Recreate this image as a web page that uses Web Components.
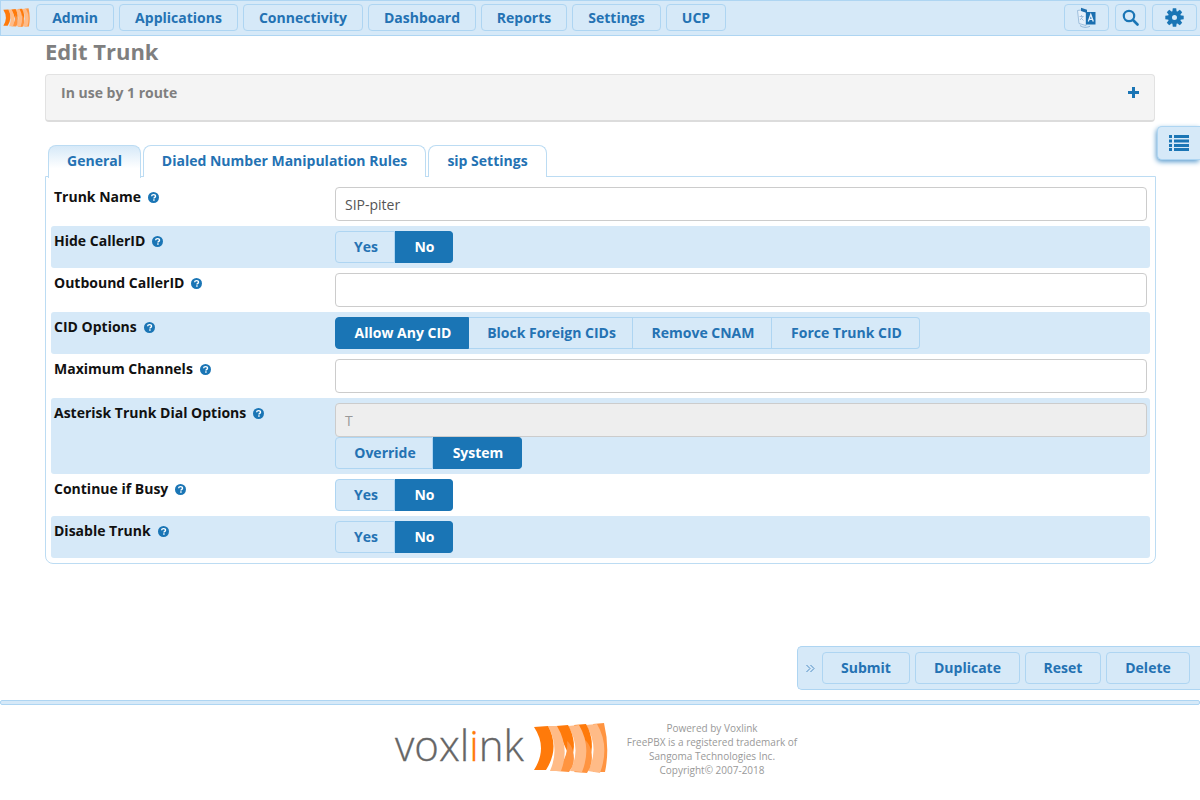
<!DOCTYPE html>
<html><head><meta charset="utf-8"><title>Edit Trunk</title>
<style>
html,body{margin:0;padding:0;background:#fff;font-family:"Open Sans",sans-serif;font-size:14px;color:#111}
body{width:1200px;height:800px;overflow:hidden;position:relative}
</style></head><body>
<fpbx-nav>
 <fpbx-btn style="margin-right:5px;width:78px">Admin</fpbx-btn><fpbx-btn style="margin-right:5px;width:119px">Applications</fpbx-btn><fpbx-btn style="margin-right:5px;width:120px">Connectivity</fpbx-btn><fpbx-btn style="margin-right:5px;width:108px">Dashboard</fpbx-btn><fpbx-btn style="margin-right:5px;width:86px">Reports</fpbx-btn><fpbx-btn style="margin-right:5px;width:89px">Settings</fpbx-btn><fpbx-btn style="width:60px">UCP</fpbx-btn>
</fpbx-nav>
<fpbx-side></fpbx-side>
<fpbx-main>
 <fpbx-panel>In use by 1 route</fpbx-panel>
 <fpbx-tabs></fpbx-tabs>
 <fpbx-form>
  <fpbx-row label="Trunk Name" kind="plain"><fpbx-field value="SIP-piter"></fpbx-field></fpbx-row>
  <fpbx-row label="Hide CallerID" kind="band"><fpbx-toggle items="Yes,No" widths="60,58" on="1"></fpbx-toggle></fpbx-row>
  <fpbx-row label="Outbound CallerID" kind="plain"><fpbx-field></fpbx-field></fpbx-row>
  <fpbx-row label="CID Options" kind="band"><fpbx-toggle items="Allow Any CID,Block Foreign CIDs,Remove CNAM,Force Trunk CID" widths="134,164,139,148" on="0"></fpbx-toggle></fpbx-row>
  <fpbx-row label="Maximum Channels" kind="plain"><fpbx-field></fpbx-field></fpbx-row>
  <fpbx-row label="Asterisk Trunk Dial Options" kind="band"><fpbx-field value="T" disabled></fpbx-field><fpbx-toggle items="Override,System" widths="98,89" on="1"></fpbx-toggle></fpbx-row>
  <fpbx-row label="Continue if Busy" kind="plain2"><fpbx-toggle items="Yes,No" widths="60,58" on="1"></fpbx-toggle></fpbx-row>
  <fpbx-row label="Disable Trunk" kind="band"><fpbx-toggle items="Yes,No" widths="60,58" on="1"></fpbx-toggle></fpbx-row>
 </fpbx-form>
</fpbx-main>
<fpbx-actions></fpbx-actions>
<fpbx-footer></fpbx-footer>
<script>
function def(name,css,html,init){
  customElements.define(name,class extends HTMLElement{
    constructor(){super();this.attachShadow({mode:'open'})}
    connectedCallback(){
      this.shadowRoot.innerHTML='<style>'+css+'</style>'+(typeof html==='function'?html(this):html);
      if(init)init(this);
    }
  });
}
const BLUE='#1a75b5',TXT='#2472b3';
const LOGO=`<path d="M593 724 L604 723 Q610 748 605 772 L593 772 Q601 748 593 724Z" fill="#ff9440"/>`
 +`<g transform="translate(40 -2)"><path d="M546 727 L557 726 Q570 748 560 775 L548 773 Q560 750 546 727Z" fill="#ffbb87"/><path d="M534 727 L546 726 Q556 744 549 762 Q546 755 534 727Z" fill="#ff7a0a"/><path d="M534 774 L547 775 Q554 765 551 752 Q549 745 545 742 Q547 758 534 774Z" fill="#ff9440"/></g>`
 +`<g transform="translate(22 -1)"><path d="M546 727 L557 726 Q570 748 560 773 L548 772 Q560 750 546 727Z" fill="#ffbb87"/><path d="M534 727 L546 726 Q556 744 549 760 Q546 755 534 727Z" fill="#ff7a0a"/><path d="M534 772 L547 773 Q554 765 551 752 Q549 745 545 742 Q547 758 534 772Z" fill="#ff9440"/></g>`
 +`<path d="M548 726 L557 726 Q570 748 561 771 L550 771 Q560 748 548 726Z" fill="#ffbb87"/><path d="M534 727 L548 726 Q560 748 546 770 L534 770 Q548 748 534 727Z" fill="#ff7a0a"/>`;
def('fpbx-btn',`:host{display:inline-flex;box-sizing:border-box;height:27px;align-items:center;justify-content:center;background:#d6e9f8;border:1px solid #aed5f2;border-radius:4px;color:${TXT};font:700 14px/1 "Open Sans",sans-serif;white-space:nowrap}`,`<slot></slot>`);
def('fpbx-nav',`:host{display:flex;box-sizing:border-box;height:36px;background:#d6e9f8;border:1px solid #aed5f2;border-width:1px 0 1px 1px;padding:3px 0 0 2px;align-items:flex-start}
 .logo{width:27px;height:20px;margin:4px 6px 0 0;flex:none}
 .r{margin-left:auto;display:flex;gap:6px}
 .items{display:flex}`,
 `<svg class="logo" viewBox="533 722 75 54" preserveAspectRatio="none">${LOGO}</svg>
 <div class="items"><slot></slot></div>
 <div class="r">
  <fpbx-btn style="width:45px"><svg width="19" height="21" viewBox="0 0 19 21">
   <path d="M.5 3.500 4 3 9 5V18.500L2 16.500Z" fill="#e6f1fb" stroke="#8fb4d6" stroke-width=".8"/>
   <path d="M4 .8 10 2.800V6L4 4Z" fill="#1f6fae"/>
   <path d="M9 5H18.500V17.500H9Z" fill="#1a6fb0"/>
   <path d="M11.300 14.500 13.800 7.500 16.300 14.500M12.200 12.300H15.400" stroke="#e6f1fb" stroke-width="1.300" fill="none"/>
   <path d="M2.500 9.500H6.500M4.500 8V9.500M3 13 6 9.500M4 11 6.500 13.500" stroke="#8fb4d6" stroke-width=".8" fill="none"/>
   <path d="M3 18.500C6 20.800 10 20.800 13 19.200" stroke="#8fb4d6" fill="none"/>
  </svg></fpbx-btn>
  <fpbx-btn style="width:31px"><svg width="17" height="17" viewBox="0 0 17 17"><circle cx="7" cy="7" r="5.200" fill="none" stroke="${BLUE}" stroke-width="2.200"/><path d="M11 11 15.500 15.500" stroke="${BLUE}" stroke-width="2.600" stroke-linecap="round"/></svg></fpbx-btn>
  <fpbx-btn style="width:45px;margin-right:3px"><svg width="19" height="19" viewBox="0 0 19 19"><g fill="${BLUE}"><path d="M9.500 3a6.500 6.500 0 1 0 0 13 6.500 6.500 0 0 0 0-13Zm0 4a2.500 2.500 0 1 1 0 5 2.500 2.500 0 0 1 0-5Z" fill-rule="evenodd"/>
  <path d="M7.800 .3h3.400l.5 3.700h-4.400Z"/><path d="M7.800 .3h3.400l.5 3.700h-4.400Z" transform="rotate(45 9.500 9.500)"/><path d="M7.800 .3h3.400l.5 3.700h-4.400Z" transform="rotate(90 9.500 9.500)"/><path d="M7.800 .3h3.400l.5 3.700h-4.400Z" transform="rotate(135 9.500 9.500)"/><path d="M7.800 .3h3.400l.5 3.700h-4.400Z" transform="rotate(180 9.500 9.500)"/><path d="M7.800 .3h3.400l.5 3.700h-4.400Z" transform="rotate(225 9.500 9.500)"/><path d="M7.800 .3h3.400l.5 3.700h-4.400Z" transform="rotate(270 9.500 9.500)"/><path d="M7.800 .3h3.400l.5 3.700h-4.400Z" transform="rotate(315 9.500 9.500)"/></g></svg></fpbx-btn>
 </div>`);
def('fpbx-side',`:host{position:absolute;left:1157px;top:126px;width:43px;height:34px;box-sizing:border-box;background:#d6e9f8;border:1px solid #aed5f2;border-right:0;border-radius:5px 0 0 5px;box-shadow:-1px 2px 5px #5f9fd0;display:flex;align-items:center;justify-content:center;padding-right:1px}`,
 `<svg width="20" height="16" viewBox="0 0 20 16" fill="${BLUE}"><rect y="0" width="3" height="3"/><rect y="4.500" width="3" height="3"/><rect y="9" width="3" height="3"/><rect y="13" width="3" height="3"/><rect x="5" y="0" width="15" height="3"/><rect x="5" y="4.500" width="15" height="3"/><rect x="5" y="9" width="15" height="3"/><rect x="5" y="13" width="15" height="3"/></svg>`);
def('fpbx-main',`:host{display:block;box-sizing:border-box;padding:0 45px}
 h1{margin:0;font:700 22px/30px "Open Sans",sans-serif;color:#7f7f7f;height:38px}`,
 `<h1>Edit Trunk</h1><slot></slot>`);
def('fpbx-panel',`:host{display:flex;box-sizing:border-box;height:48px;background:#f4f4f4;border:1px solid #e2e2e2;border-bottom:2px solid #dcdcdc;border-radius:4px;padding:8px 15px 0 15px;justify-content:space-between;color:#7f7f7f;font:700 14px/19px "Open Sans",sans-serif}
 svg{margin-top:4px}`,
 `<span><slot></slot></span><svg width="11" height="11" viewBox="0 0 11 11"><path d="M4 0h3v4h4v3H7v4H4V7H0V4h4Z" fill="${BLUE}"/></svg>`);
def('fpbx-tabs',`:host{display:flex;margin:23px 0 0 3px;gap:2px;height:32px;position:relative;z-index:1;font:700 14px/1 "Open Sans",sans-serif}
 div{box-sizing:border-box;height:32px;padding-bottom:2px;border:1px solid #bcdcf3;border-radius:8px 8px 0 0;border-bottom:0;display:flex;align-items:center;justify-content:center;color:${TXT};background:#fff;white-space:nowrap}
 .a{background:linear-gradient(#d6e9f8,#fff 70%);height:33px;padding-bottom:3px}`,
 `<div class="a" style="width:93px">General</div><div style="width:283px">Dialed Number Manipulation Rules</div><div style="width:119px">sip Settings</div>`);
def('fpbx-form',`:host{display:block;box-sizing:border-box;height:388px;border:1px solid #bcdcf3;border-radius:0 0 8px 8px;margin-top:-1px;padding:5px 5px 0 5px;width:1111px}`,`<slot></slot>`);
def('fpbx-row',`:host{display:grid;grid-template-columns:281px 812px;border-radius:3px;box-sizing:border-box;padding:5px 0 5px 3px;width:1099px}
 :host([kind=band]){background:#d6e9f8}
 .l{font:700 14px/19px "Open Sans",sans-serif;color:#111;display:flex;align-items:flex-start;white-space:nowrap}
 .c{display:flex;flex-direction:column;align-items:flex-start}
 fpbx-help{margin:5px 0 0 7px}`,
 h=>`<div class="l"><span>${h.getAttribute('label')}</span><fpbx-help></fpbx-help></div><div class="c"><slot></slot></div>`);
def('fpbx-help',`:host{display:inline-block;width:11px;height:11px}svg{display:block}`,
 `<svg width="11" height="11" viewBox="0 0 12 12"><circle cx="6" cy="6" r="6" fill="${BLUE}"/><path d="M3.900 4.700C4 3.400 4.900 2.800 6.100 2.800 7.300 2.800 8.200 3.500 8.200 4.600 8.200 5.900 6.500 5.800 6.500 7.200" stroke="#fff" stroke-width="1.500" fill="none"/><rect x="5.600" y="8" width="1.700" height="1.500" fill="#fff"/></svg>`);
def('fpbx-field',`:host{display:block;box-sizing:border-box;width:812px;height:34px;background:#fff;border:1px solid #ccc;border-radius:4px;padding:1px 9px 0;font:400 14px/32px "Open Sans",sans-serif;color:#555}
 :host([disabled]){background:#eee;color:#999}`,
 h=>h.getAttribute('value')||'');
def('fpbx-toggle',`:host{display:inline-flex;height:32px;box-sizing:border-box;font:700 14px/1 "Open Sans",sans-serif}
 span{box-sizing:border-box;height:32px;padding-left:2px;display:flex;align-items:center;justify-content:center;border:1px solid #aed5f2;border-left-width:0;color:${TXT};background:#d6e9f8;white-space:nowrap}
 span:first-of-type{border-left-width:1px;border-radius:4px 0 0 4px}
 span:last-of-type{border-radius:0 4px 4px 0}
 .on{background:${BLUE};color:#fff;border-color:${BLUE}}`,
 h=>{const w=h.getAttribute('widths').split(',');return h.getAttribute('items').split(',').map((t,i)=>`<span style="width:${w[i]}px" class="${i==h.getAttribute('on')?'on':''}">${t}</span>`).join('')});
def('fpbx-actions',`:host{position:absolute;left:797px;top:646px;width:403px;height:44px;box-sizing:border-box;background:#d6e9f8;border:1px solid #aed5f2;border-right:0;border-radius:5px 0 0 5px;display:flex;align-items:center;gap:5px;padding-left:8px}
 svg{margin-right:2px;flex:none}`,
 `<svg width="9" height="9" viewBox="0 0 9 9" fill="none" stroke="#4d8cc4" stroke-width="1"><path d="M.5 1 4 4.500.5 8M4.500 1 8 4.500 4.500 8"/></svg>
 <fpbx-btn style="width:88px;height:32px">Submit</fpbx-btn><fpbx-btn style="width:105px;height:32px">Duplicate</fpbx-btn><fpbx-btn style="width:76px;height:32px">Reset</fpbx-btn><fpbx-btn style="width:84px;height:32px">Delete</fpbx-btn>`);
def('fpbx-footer',`:host{position:absolute;left:0;top:700px;width:1200px;height:100px;display:block}
 .bar{height:5px;box-sizing:border-box;background:#d6e9f8;border:1px solid #aed5f2;border-radius:2px}
 .w{display:flex;position:relative;height:95px}
 .word{position:absolute;left:395px;top:17px;font:300 42px/46px "Open Sans",sans-serif;color:#666;-webkit-text-stroke:.3px #666}
 .word b{font-weight:300;color:#ff7a0a;-webkit-text-stroke:.3px #ff7a0a}
 svg{position:absolute;left:530px;top:15px}
 .t{position:absolute;left:612px;top:16px;width:200px;text-align:center;font:400 10px/14px "Open Sans",sans-serif;color:#999}`,
 `<div class="bar"></div><div class="w"><div class="word">voxl<b>i</b>nk</div>
 <svg width="80" height="56" viewBox="530 720 80 56">${LOGO}</svg>
 <div class="t">Powered by Voxlink<br>FreePBX is a registered trademark of<br>Sangoma Technologies Inc.<br>Copyright© 2007-2018</div></div>`);
</script>
</body></html>
